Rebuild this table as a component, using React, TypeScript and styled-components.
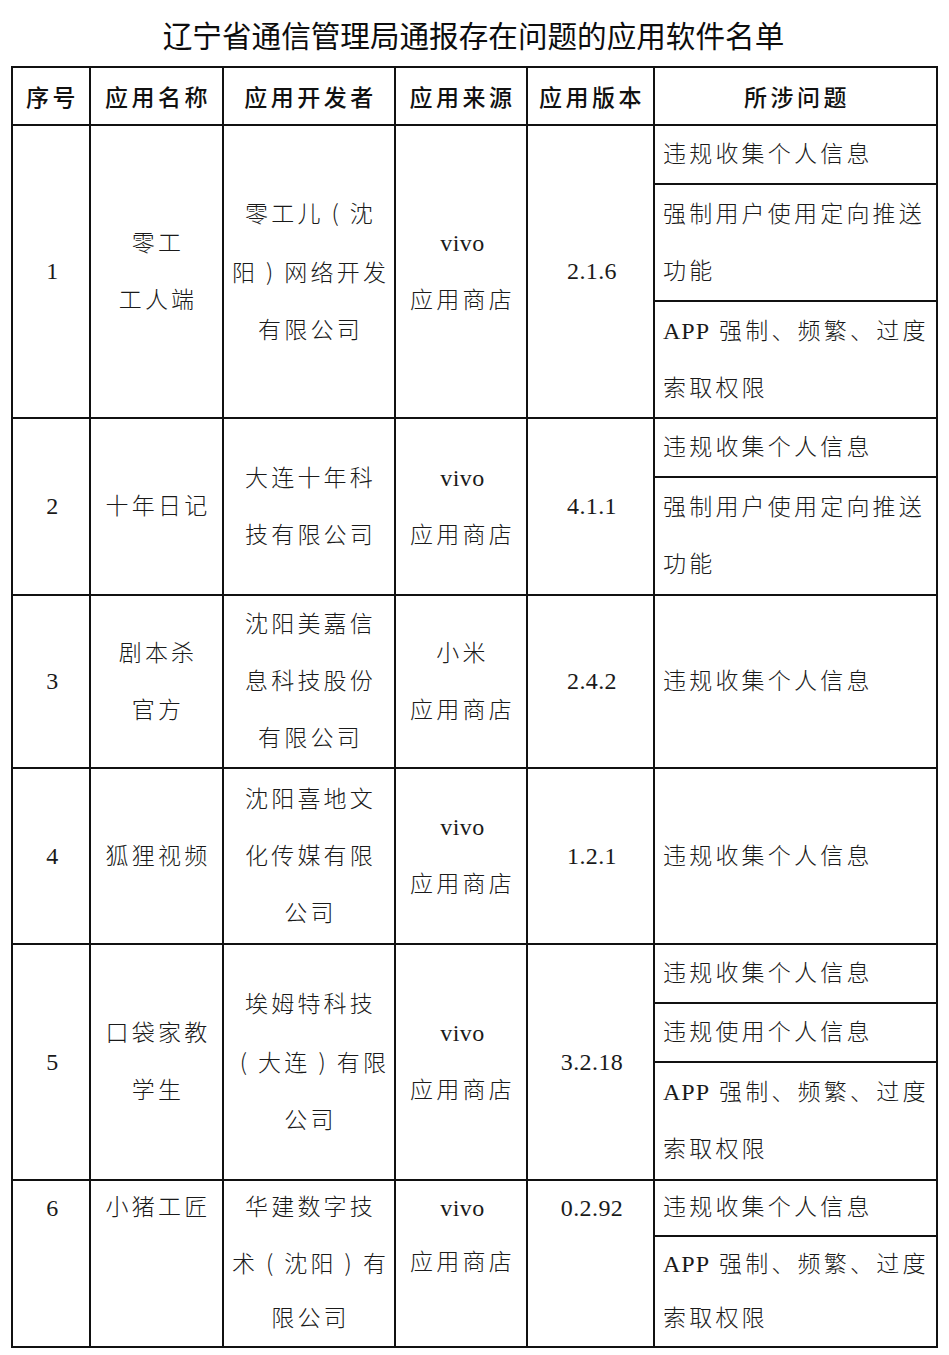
import React from "react";
import styled, { createGlobalStyle, css } from "styled-components";

const GlobalStyle = createGlobalStyle`
  html, body {
    margin: 0;
    padding: 0;
    background: #ffffff;
  }
  body {
    font-family: "Liberation Serif", "Noto Sans CJK SC", serif;
    color: #111;
  }
`;

const Page = styled.div`
  width: 949px;
  min-height: 1355px;
  box-sizing: border-box;
  padding: 0 13px 0 11px;
  background: #fff;
`;

const Title = styled.h1`
  margin: 0;
  height: 66px;
  box-sizing: border-box;
  padding-top: 3px;
  display: flex;
  align-items: center;
  justify-content: center;
  font-family: "Noto Sans CJK SC", sans-serif;
  font-weight: 400;
  font-size: 29.6px;
  color: #0d0d0d;
  letter-spacing: 0;
`;

const Table = styled.table`
  width: 925px;
  table-layout: fixed;
  border-collapse: collapse;
  border: 2px solid #111;
`;

const HeadCell = styled.th`
  height: 56px;
  padding: 0 0 0 3px;
  border: 2px solid #111;
  font-family: "Noto Sans CJK SC", sans-serif;
  font-weight: 500;
  font-size: 23px;
  letter-spacing: 3.5px;
  color: #111;
  text-align: center;
  vertical-align: middle;
`;

const cellText = css<{ $compact?: boolean }>`
  font-family: "Liberation Serif", "Noto Sans CJK SC", serif;
  font-weight: 300;
  font-size: 23px;
  letter-spacing: 3.2px;
  line-height: ${(p) => (p.$compact ? "54px" : "57px")};
  color: #1a1a1a;
`;

const Cell = styled.td<{ $top?: boolean; $compact?: boolean }>`
  ${cellText};
  padding: 0 0 0 3px;
  border: 2px solid #111;
  text-align: center;
  vertical-align: ${(p) => (p.$top ? "top" : "middle")};
  white-space: nowrap;
`;

const ProblemCell = styled.td<{ $h: number; $compact?: boolean }>`
  ${cellText};
  height: ${(p) => p.$h}px;
  box-sizing: border-box;
  padding: 0 0 0 8px;
  border: 2px solid #111;
  text-align: left;
  vertical-align: middle;
  white-space: nowrap;
`;

const Line = styled.div``;

const Latin = styled.span<{ $spaced?: boolean }>`
  font-family: "Liberation Serif", serif;
  font-weight: 400;
  font-size: 24px;
  letter-spacing: ${(p) => (p.$spaced ? "1px" : "0.4px")};
`;

const Paren = styled.span`
  display: inline-block;
  width: 23px;
  margin-right: 3.2px;
  text-align: center;
  letter-spacing: 0;
  font-family: "Noto Sans CJK SC", sans-serif;
  font-weight: 300;
`;

type Problem = { lines: string[]; h: number };
type Row = {
  no: string;
  name: string[];
  dev: string[];
  src: string[];
  ver: string;
  problems: Problem[];
  top?: boolean;
};

const APP_LINES = ["APP 强制、频繁、过度", "索取权限"];

const rows: Row[] = [
  {
    no: "1",
    name: ["零工", "工人端"],
    dev: ["零工儿（沈", "阳）网络开发", "有限公司"],
    src: ["vivo", "应用商店"],
    ver: "2.1.6",
    problems: [
      { lines: ["违规收集个人信息"], h: 58 },
      { lines: ["强制用户使用定向推送", "功能"], h: 117 },
      { lines: APP_LINES, h: 117 },
    ],
  },
  {
    no: "2",
    name: ["十年日记"],
    dev: ["大连十年科", "技有限公司"],
    src: ["vivo", "应用商店"],
    ver: "4.1.1",
    problems: [
      { lines: ["违规收集个人信息"], h: 58 },
      { lines: ["强制用户使用定向推送", "功能"], h: 118 },
    ],
  },
  {
    no: "3",
    name: ["剧本杀", "官方"],
    dev: ["沈阳美嘉信", "息科技股份", "有限公司"],
    src: ["小米", "应用商店"],
    ver: "2.4.2",
    problems: [{ lines: ["违规收集个人信息"], h: 171 }],
  },
  {
    no: "4",
    name: ["狐狸视频"],
    dev: ["沈阳喜地文", "化传媒有限", "公司"],
    src: ["vivo", "应用商店"],
    ver: "1.2.1",
    problems: [{ lines: ["违规收集个人信息"], h: 176 }],
  },
  {
    no: "5",
    name: ["口袋家教", "学生"],
    dev: ["埃姆特科技", "（大连）有限", "公司"],
    src: ["vivo", "应用商店"],
    ver: "3.2.18",
    problems: [
      { lines: ["违规收集个人信息"], h: 58 },
      { lines: ["违规使用个人信息"], h: 58 },
      { lines: APP_LINES, h: 118 },
    ],
  },
  {
    no: "6",
    name: ["小猪工匠"],
    dev: ["华建数字技", "术（沈阳）有", "限公司"],
    src: ["vivo", "应用商店"],
    ver: "0.2.92",
    top: true,
    problems: [
      { lines: ["违规收集个人信息"], h: 54 },
      { lines: APP_LINES, h: 111 },
    ],
  },
];

const withParens = (text: string) =>
  text.split(/([（）])/).map((part, i) =>
    part === "（" ? (
      <Paren key={i}>(</Paren>
    ) : part === "）" ? (
      <Paren key={i}>)</Paren>
    ) : (
      <React.Fragment key={i}>{part}</React.Fragment>
    )
  );

const renderText = (text: string) => {
  if (text.startsWith("APP ")) {
    return (
      <>
        <Latin $spaced>APP</Latin> {text.slice(4)}
      </>
    );
  }
  if (/^[A-Za-z0-9.]+$/.test(text)) return <Latin>{text}</Latin>;
  return withParens(text);
};

const Lines: React.FC<{ lines: string[] }> = ({ lines }) => (
  <>
    {lines.map((l, i) => (
      <Line key={i}>{renderText(l)}</Line>
    ))}
  </>
);

const headers = ["序号", "应用名称", "应用开发者", "应用来源", "应用版本", "所涉问题"];
const widths = [78, 133, 172, 132, 127, 283];

export default function App() {
  return (
    <>
      <GlobalStyle />
      <Page>
        <Title>辽宁省通信管理局通报存在问题的应用软件名单</Title>
        <Table>
          <colgroup>
            {widths.map((w, i) => (
              <col key={i} style={{ width: w }} />
            ))}
          </colgroup>
          <thead>
            <tr>
              {headers.map((h) => (
                <HeadCell key={h}>{h}</HeadCell>
              ))}
            </tr>
          </thead>
          <tbody>
            {rows.map((r) => {
              const span = r.problems.length;
              const c = r.top;
              return r.problems.map((p, pi) => (
                <tr key={`${r.no}-${pi}`}>
                  {pi === 0 && (
                    <>
                      <Cell rowSpan={span} $top={r.top} $compact={c}>
                        <Lines lines={[r.no]} />
                      </Cell>
                      <Cell rowSpan={span} $top={r.top} $compact={c}>
                        <Lines lines={r.name} />
                      </Cell>
                      <Cell rowSpan={span} $top={r.top} $compact={c}>
                        <Lines lines={r.dev} />
                      </Cell>
                      <Cell rowSpan={span} $top={r.top} $compact={c}>
                        <Lines lines={r.src} />
                      </Cell>
                      <Cell rowSpan={span} $top={r.top} $compact={c}>
                        <Lines lines={[r.ver]} />
                      </Cell>
                    </>
                  )}
                  <ProblemCell $h={p.h} $compact={c}>
                    <Lines lines={p.lines} />
                  </ProblemCell>
                </tr>
              ));
            })}
          </tbody>
        </Table>
      </Page>
    </>
  );
}
